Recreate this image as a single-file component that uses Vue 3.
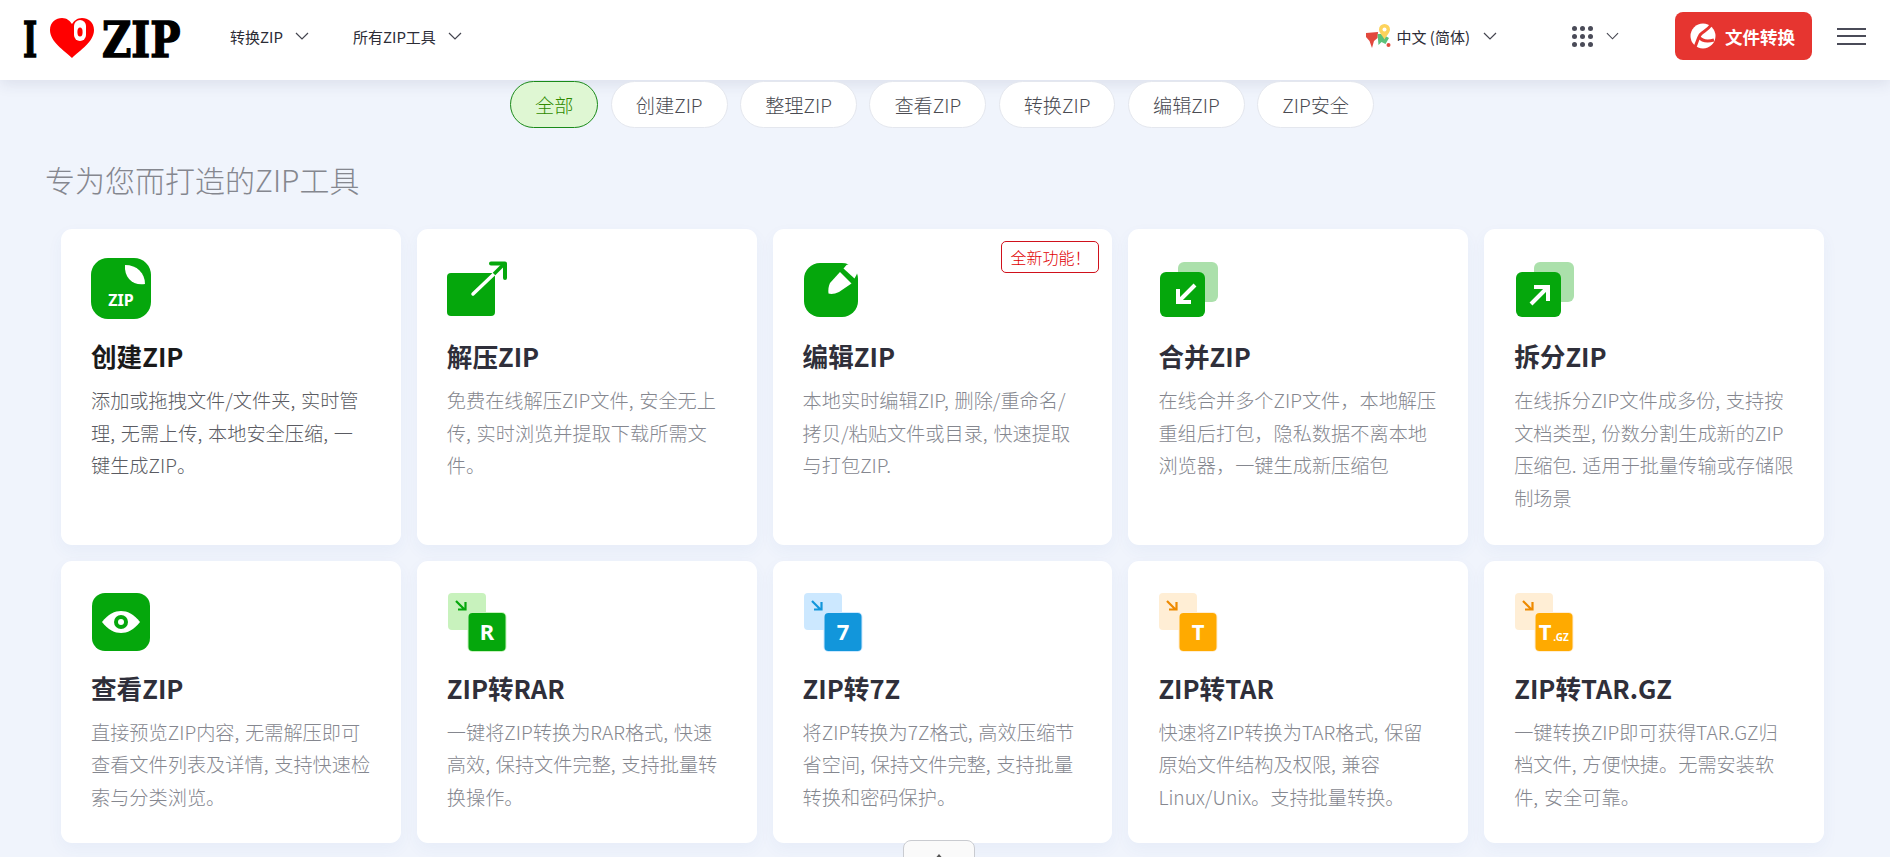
<script setup>
const tabs = ['全部', '创建ZIP', '整理ZIP', '查看ZIP', '转换ZIP', '编辑ZIP', 'ZIP安全']
const GREEN = '#05a70c'
const cards = [
  { title: '创建ZIP', desc: '添加或拖拽文件/文件夹, 实时管理, 无需上传, 本地安全压缩, 一键生成ZIP。', icon: 'create', active: true },
  { title: '解压ZIP', desc: '免费在线解压ZIP文件, 安全无上传, 实时浏览并提取下载所需文件。', icon: 'extract' },
  { title: '编辑ZIP', desc: '本地实时编辑ZIP, 删除/重命名/拷贝/粘贴文件或目录, 快速提取与打包ZIP.', icon: 'edit', badge: '全新功能！' },
  { title: '合并ZIP', desc: '在线合并多个ZIP文件，本地解压重组后打包，隐私数据不离本地浏览器，一键生成新压缩包', icon: 'merge' },
  { title: '拆分ZIP', desc: '在线拆分ZIP文件成多份, 支持按文档类型, 份数分割生成新的ZIP压缩包. 适用于批量传输或存储限制场景', icon: 'split' },
  { title: '查看ZIP', desc: '直接预览ZIP内容, 无需解压即可查看文件列表及详情, 支持快速检索与分类浏览。', icon: 'view' },
  { title: 'ZIP转RAR', desc: '一键将ZIP转换为RAR格式, 快速高效, 保持文件完整, 支持批量转换操作。', icon: 'convert', letter: 'R', color: GREEN, light: '#c8f2bd', arrow: GREEN },
  { title: 'ZIP转7Z', desc: '将ZIP转换为7Z格式, 高效压缩节省空间, 保持文件完整, 支持批量转换和密码保护。', icon: 'convert', letter: '7', color: '#1296db', light: '#cce8ff', arrow: '#1296db' },
  { title: 'ZIP转TAR', desc: '快速将ZIP转换为TAR格式, 保留原始文件结构及权限, 兼容Linux/Unix。支持批量转换。', icon: 'convert', letter: 'T', color: '#ffaa00', light: '#ffeed5', arrow: '#ee8a00' },
  { title: 'ZIP转TAR.GZ', desc: '一键转换ZIP即可获得TAR.GZ归档文件, 方便快捷。无需安装软件, 安全可靠。', icon: 'convert', letter: 'T', sub: '.GZ', color: '#ffaa00', light: '#ffeed5', arrow: '#ee8a00' },
]
</script>

<template>
  <div class="page">
    <header class="header">
      <div class="logo">
        <span class="logo-text">I</span>
        <svg class="heart" width="46" height="42" viewBox="0 0 46 42">
          <path d="M23 41 C15 33 1 25 1 13 C1 5 7 1 13 1 C18 1 21 4 23 7 C25 4 28 1 33 1 C39 1 45 5 45 13 C45 25 31 33 23 41 Z" fill="#ff0000" />
          <rect x="25" y="3" width="12" height="21" rx="6" fill="#fff" />
          <ellipse cx="31" cy="15" rx="2.6" ry="4.5" fill="#ff0000" />
        </svg>
        <span class="logo-text zip">ZIP</span>
      </div>
      <nav class="nav">
        <a class="nav-item">转换ZIP
          <svg class="chev" width="14" height="8" viewBox="0 0 14 8"><path d="M1 1l6 6 6-6" /></svg>
        </a>
        <a class="nav-item">所有ZIP工具
          <svg class="chev" width="14" height="8" viewBox="0 0 14 8"><path d="M1 1l6 6 6-6" /></svg>
        </a>
      </nav>
      <div class="right">
        <div class="lang">
          <svg width="26" height="25" viewBox="0 0 26 25">
            <path d="M0 9 L12 8 L11.500 14 L8 17 L6 24 L3.500 17 L0 13 Z" fill="#e2483d" />
            <path d="M11.500 10 L16 10 L23 14 L19.500 20 L15.500 18 L12.500 21 Z" fill="#5cc17a" />
            <circle cx="22.500" cy="21" r="2" fill="#e2483d" />
            <path d="M13 5.500 A5.500 5.500 0 0 1 24 5.500 C24 9 20 12 18.500 15.500 C17 12 13 9 13 5.500 Z" fill="#fdd35c" />
            <circle cx="18.500" cy="5.500" r="2" fill="#fff" />
          </svg>
          <span>中文 (简体)</span>
          <svg class="chev" width="14" height="8" viewBox="0 0 14 8"><path d="M1 1l6 6 6-6" /></svg>
        </div>
        <div class="apps">
          <span class="dots"><i v-for="n in 9" :key="n"></i></span>
          <svg class="chev" width="13" height="8" viewBox="0 0 14 8"><path d="M1 1l6 6 6-6" /></svg>
        </div>
        <button class="convert-btn">
          <svg width="26" height="26" viewBox="0 0 26 26">
            <circle cx="13" cy="13" r="12.500" fill="#fff" />
            <path d="M21 2 C17 8 13 8 10 12 C8 15 7 20 5 24" stroke="#e63530" stroke-width="3" fill="none" />
            <path d="M9 14 C12 18 17 19 24 17" stroke="#e63530" stroke-width="3" fill="none" />
          </svg>
          <span>文件转换</span>
        </button>
        <div class="burger"><i></i><i></i><i></i></div>
      </div>
    </header>

    <div class="tabs">
      <button v-for="(t, i) in tabs" :key="t" class="tab" :class="{ on: i === 0 }">{{ t }}</button>
    </div>

    <h2 class="heading">专为您而打造的ZIP工具</h2>

    <section class="grid">
      <article v-for="c in cards" :key="c.title" class="card" :class="{ active: c.active }">
        <span v-if="c.badge" class="badge">{{ c.badge }}</span>
        <svg class="icon" width="60" height="62" viewBox="0 0 60 62">
          <template v-if="c.icon === 'create'">
            <rect x="0" y="0" width="60" height="61" rx="17" fill="#05a70c" />
            <path d="M34 7 C46 7 54 15 54 26 C42 28 33 20 34 7 Z" fill="#fff" />
            <text x="30" y="48" class="i-zip">ZIP</text>
          </template>
          <template v-else-if="c.icon === 'extract'">
            <rect x="0" y="15" width="48" height="43" rx="4" fill="#05a70c" />
            <path d="M26 36 L47 16" stroke="#fff" stroke-width="3.500" stroke-linecap="round" />
            <path d="M47 16 L57 6" stroke="#05a70c" stroke-width="3.500" />
            <path d="M44 5.500 H58 V20" stroke="#05a70c" stroke-width="4" fill="none" stroke-linecap="round" stroke-linejoin="round" />
          </template>
          <template v-else-if="c.icon === 'edit'">
            <rect x="1" y="5" width="54" height="54" rx="16" fill="#05a70c" />
            <path d="M37 14 L48.500 25.500 L36 34 C32 36 28 36.500 25.500 35.500 C25 32 25.500 28 27 25 Z" fill="#fff" />
            <path d="M40.500 10.500 L43.500 7 Q49 3.500 53.500 8 Q56.500 13 51.500 20.500 Z" fill="#fff" />
          </template>
          <template v-else-if="c.icon === 'merge' || c.icon === 'split'">
            <rect x="20" y="4" width="40" height="40" rx="6" fill="#abe0ab" />
            <rect x="2" y="14" width="45" height="45" rx="6" fill="#05a70c" />
            <template v-if="c.icon === 'merge'">
              <path d="M37 27 L22 42" stroke="#fff" stroke-width="4" />
              <path d="M20 31 V44 H33" stroke="#fff" stroke-width="4" fill="none" />
            </template>
            <template v-else>
              <path d="M17 46 L32 31" stroke="#fff" stroke-width="4" />
              <path d="M20 29 H34 V43" stroke="#fff" stroke-width="4" fill="none" />
            </template>
          </template>
          <template v-else-if="c.icon === 'view'">
            <rect x="1" y="3" width="58" height="58" rx="13" fill="#05a70c" />
            <path d="M11 32 C17 24 24 21 30 21 C36 21 43 24 49 32 C43 40 36 43 30 43 C24 43 17 40 11 32 Z" fill="#fff" />
            <circle cx="30" cy="32" r="7" fill="#05a70c" />
            <circle cx="30" cy="32" r="3" fill="#fff" />
          </template>
          <template v-else>
            <rect x="1" y="3" width="38" height="37" rx="4" :fill="c.light" />
            <path d="M9 11 L17 19 M18.500 12 V19.500 H11" :stroke="c.arrow" stroke-width="2.200" fill="none" />
            <rect x="20.500" y="22" width="39" height="40" rx="5" :fill="c.light" />
            <rect x="21.500" y="23" width="37" height="38" rx="4" :fill="c.color" />
            <text :x="c.sub ? 31 : 40" y="50" class="i-letter">{{ c.letter }}</text>
            <text v-if="c.sub" x="47" y="51" class="i-sub">{{ c.sub }}</text>
          </template>
        </svg>
        <h3 class="title">{{ c.title }}</h3>
        <p class="desc">{{ c.desc }}</p>
      </article>
    </section>

    <button class="to-top" aria-label="top"><i></i></button>
  </div>
</template>

<style>
html, body { margin: 0; background: #f0f4fc; overflow: hidden; }
</style>

<style scoped>
.page {
  height: 857px;
  overflow: hidden;
  background: #f0f4fc;
  font-family: "Noto Sans CJK SC", "Noto Sans", sans-serif;
  color: #2f2f3a;
}
.header {
  height: 80px;
  background: #fff;
  display: flex;
  align-items: center;
  box-shadow: 0 4px 14px rgba(40, 50, 90, 0.1);
  position: relative;
  z-index: 2;
}
.logo {
  display: flex;
  align-items: center;
  width: 160px;
  margin-left: 23px;
  height: 60px;
}
.logo-text {
  font-family: "DejaVu Serif", serif;
  font-weight: 700;
  font-size: 49px;
  line-height: 1;
  color: #000;
  -webkit-text-stroke: 1.500px #000;
  width: 16px;
  display: inline-block;
  transform: scaleX(0.62);
  transform-origin: left center;
  flex: none;
}
.zip { transform: scaleX(0.82); margin-left: 7px; width: 77px; }
.heart { margin-left: 10px; flex: none; margin-top: -4px; }
.nav {
  display: flex;
  gap: 44px;
  margin-left: 47px;
  margin-top: -8px;
}
.nav-item {
  display: flex;
  align-items: center;
  gap: 12px;
  font-size: 15px;
  color: #2c2c36;
}
.chev { flex: none; }
.chev path { fill: none; stroke: #44454f; stroke-width: 1.200; }
.right {
  margin-left: auto;
  display: flex;
  align-items: center;
  margin-top: -8px;
}
.lang {
  display: flex;
  align-items: center;
  font-size: 15px;
  color: #2c2c36;
  gap: 4px;
}
.lang .chev { margin-left: 9px; }
.apps {
  display: flex;
  align-items: center;
  gap: 13px;
  margin-left: 75px;
}
.dots {
  display: grid;
  grid-template-columns: repeat(3, 5px);
  gap: 3px;
}
.dots i {
  width: 5px;
  height: 5px;
  border-radius: 50%;
  background: #4a4b58;
}
.convert-btn {
  margin-left: 56px;
  width: 137px;
  height: 48px;
  background: #e63530;
  border: none;
  border-radius: 8px;
  color: #fff;
  display: flex;
  align-items: center;
  gap: 9px;
  padding: 0 0 0 15px;
  font-family: inherit;
  font-size: 17.500px;
  font-weight: 700;
  box-sizing: border-box;
}
.burger {
  margin-left: 25px;
  margin-right: 24px;
  width: 29px;
  display: flex;
  flex-direction: column;
  gap: 5.500px;
}
.burger i {
  height: 2px;
  background: #4a4b58;
  display: block;
}
.tabs {
  display: flex;
  justify-content: center;
  gap: 12.500px;
  margin-top: 1px;
  padding-right: 6px;
  position: relative;
  z-index: 3;
}
.tab {
  height: 47px;
  min-width: 88px;
  padding: 0 24px;
  box-sizing: border-box;
  border: 1px solid #e4e7ee;
  border-radius: 24px;
  background: #fff;
  font-family: inherit;
  font-size: 19.200px;
  font-weight: 300;
  color: #4a4b52;
}
.tab.on {
  background: #dff7d3;
  border-color: #1a8a1a;
  color: #2f8a00;
}
.heading {
  margin: 30px 0 0 45px;
  font-size: 30px;
  line-height: 42px;
  font-weight: 300;
  color: #85878f;
}
.grid {
  display: grid;
  grid-template-columns: repeat(5, 1fr);
  gap: 16px;
  margin: 29px 66px 0 61px;
}
.card {
  position: relative;
  background: #fff;
  border-radius: 11px;
  padding: 29px 30px 30px;
  box-shadow: 0 6px 16px rgba(60, 90, 170, 0.05);
}
.icon {
  display: block;
  overflow: visible;
}
.i-zip {
  font-family: "Noto Sans", sans-serif;
  font-weight: 700;
  font-size: 16px;
  fill: #fff;
  text-anchor: middle;
}
.i-letter {
  font-family: "Noto Sans", sans-serif;
  font-weight: 700;
  font-size: 22px;
  fill: #fff;
  text-anchor: middle;
}
.i-sub {
  font-family: "Noto Sans", sans-serif;
  font-weight: 700;
  font-size: 10px;
  fill: #fff;
  text-anchor: middle;
}
.title {
  margin: 18px 0 0;
  font-size: 25.600px;
  line-height: 36px;
  font-weight: 700;
  color: #2f2f3a;
}
.desc {
  margin: 10px 0 0;
  font-size: 19.200px;
  line-height: 32.640px;
  font-weight: 300;
  word-spacing: 1.500px;
  color: #85878f;
}
.card.active .title { color: #1a1a1a; }
.card.active .desc { color: #5a5b62; }
.badge {
  position: absolute;
  top: 12px;
  right: 13px;
  width: 98px;
  height: 32px;
  box-sizing: border-box;
  border: 1px solid #d0111b;
  border-radius: 5px;
  color: #e00000;
  font-size: 16px;
  font-weight: 300;
  line-height: 30px;
  padding-left: 8px;
  white-space: nowrap;
}
.to-top {
  position: fixed;
  left: 903px;
  top: 840px;
  width: 72px;
  height: 40px;
  background: #fafafa;
  border: 1px solid #c9cbd0;
  border-radius: 8px 8px 0 0;
  padding: 0;
  z-index: 4;
}
.to-top i {
  position: absolute;
  left: 29px;
  top: 13px;
  border: 6px solid transparent;
  border-top: 0;
  border-bottom: 7px solid #555;
}
</style>
